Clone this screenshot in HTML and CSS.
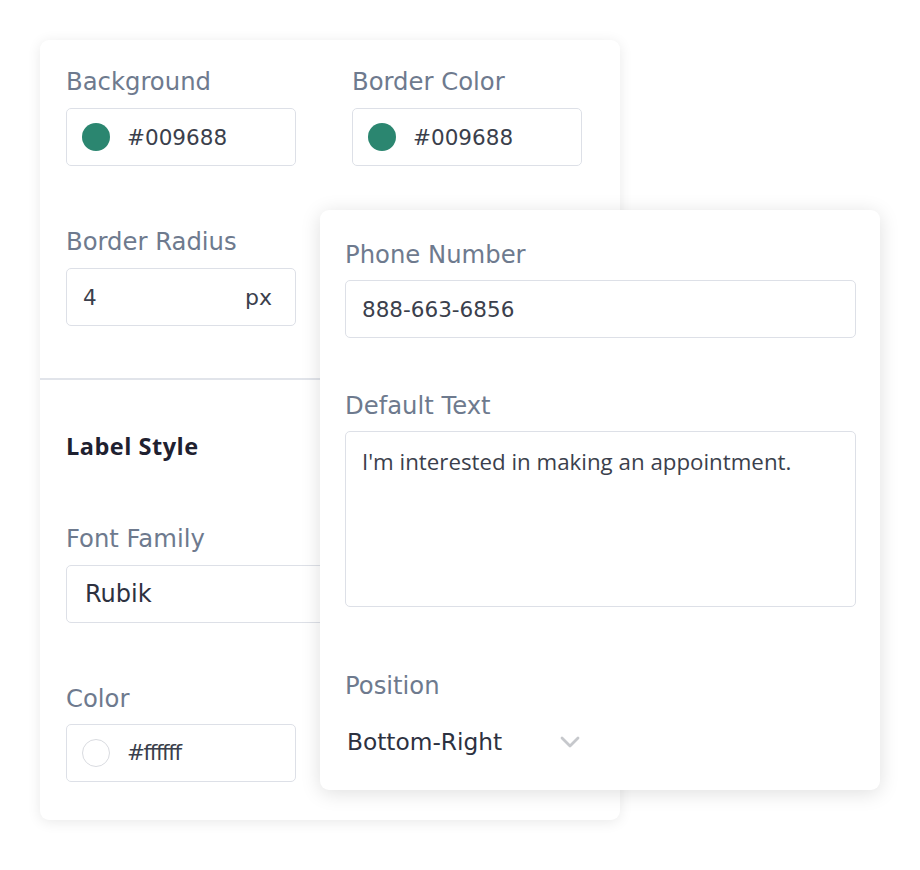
FILE: index.html
```html
<!DOCTYPE html>
<html>
<head>
<meta charset="utf-8">
<link rel="stylesheet" href="styles.css">
</head>
<body>
<div class="stage">
  <div class="card card-back">
    <div class="section">
      <div class="grid2">
        <div class="field">
          <div class="label">Background</div>
          <div class="input color-input"><span class="swatch teal"></span><span class="val">#009688</span></div>
        </div>
        <div class="field">
          <div class="label">Border Color</div>
          <div class="input color-input"><span class="swatch teal"></span><span class="val">#009688</span></div>
        </div>
      </div>
      <div class="field field-gap">
        <div class="label">Border Radius</div>
        <div class="input unit-input"><span class="val">4</span><span class="unit">px</span></div>
      </div>
    </div>
    <div class="divider"></div>
    <div class="section section2">
      <div class="heading">Label Style</div>
      <div class="field font-field">
        <div class="label">Font Family</div>
        <div class="input wide"><span class="val big">Rubik</span></div>
      </div>
      <div class="field color-field">
        <div class="label">Color</div>
        <div class="input color-input"><span class="swatch white"></span><span class="val hex-f">#ffffff</span></div>
      </div>
    </div>
  </div>
  <div class="card card-front">
    <div class="field">
      <div class="label">Phone Number</div>
      <div class="input full"><span class="val">888-663-6856</span></div>
    </div>
    <div class="field front-gap">
      <div class="label">Default Text</div>
      <div class="input textarea"><span class="val area-text">I'm interested in making an appointment.</span></div>
    </div>
    <div class="field front-gap2">
      <div class="label">Position</div>
      <div class="select">
        <span class="select-val">Bottom-Right</span>
        <svg class="chev" width="20" height="12" viewBox="0 0 20 12"><path d="M2 2 L10 10 L18 2" fill="none" stroke="#c6c8cc" stroke-width="2.8" stroke-linecap="round" stroke-linejoin="round"/></svg>
      </div>
    </div>
  </div>
</div>
</body>
</html>
```

FILE: styles.css
```css
* { box-sizing: border-box; }
html, body { margin: 0; padding: 0; background: #ffffff; }
body {
  font-family: "DejaVu Sans", "Liberation Sans", sans-serif;
  width: 920px;
  height: 870px;
  overflow: hidden;
}
.stage {
  position: relative;
  width: 920px;
  height: 870px;
  padding: 40px 0 0 40px;
}
.card {
  background: #fff;
  border-radius: 9px;
}
.card-back {
  width: 580px;
  height: 780px;
  box-shadow: 0 2px 14px rgba(0, 0, 0, 0.09);
  overflow: hidden;
}
.section { padding: 27px 38px 0 26px; }
.grid2 {
  display: grid;
  grid-template-columns: 230px 230px;
  column-gap: 56px;
}
.field { display: flex; flex-direction: column; }
.label {
  height: 28px;
  line-height: 30px;
  font-size: 24.3px;
  color: #6e7a8e;
  margin-bottom: 13px;
  white-space: nowrap;
}
.input {
  height: 58px;
  border: 1.5px solid #dde0e7;
  border-radius: 5px;
  display: flex;
  align-items: center;
  background: #fff;
}
.color-input { width: 230px; padding-left: 15px; }
.swatch {
  width: 28px;
  height: 28px;
  border-radius: 50%;
  flex: none;
  margin-right: 17px;
}
.swatch.teal { background: #2b8670; }
.swatch.white { background: #fff; border: 1.5px solid #d9dbe0; }
.val {
  font-size: 21.5px;
  color: #3b3f4c;
  white-space: nowrap;
}
.hex-f { letter-spacing: -1.4px; }
.field-gap { margin-top: 61px; }
.unit-input {
  width: 230px;
  padding: 0 23px 0 16px;
  justify-content: space-between;
}
.unit { font-size: 22px; color: #3b3f4c; }
.divider {
  height: 1.5px;
  background: #e1e4ea;
  margin-top: 52px;
}
.section2 { padding-top: 52px; }
.heading {
  height: 28px;
  line-height: 28px;
  font-family: "Open Sans", "Liberation Sans", sans-serif;
  font-size: 23.5px;
  font-weight: 700;
  letter-spacing: 0.5px;
  color: #1f2130;
}
.font-field { margin-top: 64px; }
.wide { width: 520px; padding-left: 18px; }
.val.big { font-size: 24px; color: #2d3140; }
.color-field { margin-top: 61px; }
.color-field .label { margin-bottom: 12px; }

.card-front {
  position: absolute;
  left: 320px;
  top: 210px;
  width: 560px;
  height: 580px;
  padding: 30px 24px 0 25px;
  box-shadow: 0 3px 20px rgba(0, 0, 0, 0.13);
}
.card-front .label { margin-bottom: 12px; }
.full { width: 511px; padding-left: 16px; }
.front-gap { margin-top: 53px; }
.textarea {
  width: 511px;
  height: 176px;
  align-items: flex-start;
  padding: 14px 16px;
}
.area-text {
  font-family: "Open Sans", "Liberation Sans", sans-serif;
  font-size: 22.3px;
}
.front-gap2 { margin-top: 64px; }
.card-front .front-gap2 .label { margin-bottom: 28px; }
.select {
  height: 28px;
  display: flex;
  align-items: center;
  padding-left: 2px;
}
.select-val {
  font-size: 23.3px;
  color: #2d3140;
  width: 213px;
}
.chev { display: block; margin-top: 2px; }
```
